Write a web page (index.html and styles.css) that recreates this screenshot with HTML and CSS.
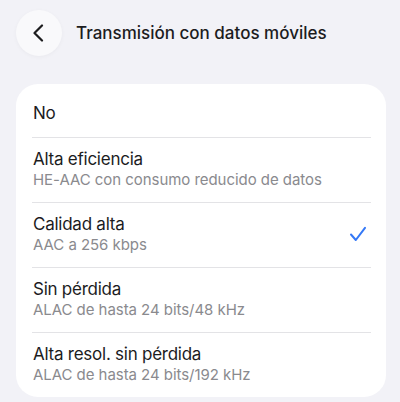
FILE: index.html
```html
<!DOCTYPE html>
<html lang="es">
<head>
<meta charset="utf-8">
<link rel="stylesheet" href="styles.css">
</head>
<body>
<div class="screen">
  <header class="nav">
    <button class="back" aria-label="Atrás">
      <svg width="12" height="18" viewBox="0 0 12 18"><path d="M10 1.5 L2.5 9 L10 16.5" fill="none" stroke="#1c1c1e" stroke-width="2.2" stroke-linecap="round" stroke-linejoin="round"/></svg>
    </button>
    <h1 class="title">Transmisión con datos móviles</h1>
  </header>
  <div class="card">
    <div class="row single"><div class="text"><div class="label">No</div></div></div>
    <div class="row"><div class="text"><div class="label">Alta eficiencia</div><div class="sub">HE-AAC con consumo reducido de datos</div></div></div>
    <div class="row"><div class="text"><div class="label">Calidad alta</div><div class="sub">AAC a 256 kbps</div></div>
      <svg class="check" width="18" height="16" viewBox="0 0 18 16"><path d="M2 8.5 L6.8 14 L16 1.8" fill="none" stroke="#3478f6" stroke-width="2" stroke-linecap="round" stroke-linejoin="round"/></svg>
    </div>
    <div class="row"><div class="text"><div class="label">Sin pérdida</div><div class="sub">ALAC de hasta 24 bits/48 kHz</div></div></div>
    <div class="row last"><div class="text"><div class="label">Alta resol. sin pérdida</div><div class="sub">ALAC de hasta 24 bits/192 kHz</div></div></div>
  </div>
</div>
</body>
</html>
```
FILE: styles.css
```css
* { box-sizing: border-box; }
html, body { margin: 0; padding: 0; }
body {
  background: #f2f2f7;
  font-family: Inter, "Noto Sans", "Liberation Sans", sans-serif;
  color: #1c1c1e;
  width: 400px;
  height: 402px;
  overflow: hidden;
}
.screen { padding: 10px 14px 0 16px; }
.nav {
  display: flex;
  align-items: center;
  gap: 14px;
  height: 46px;
}
.back {
  width: 46px;
  height: 46px;
  border-radius: 50%;
  border: none;
  background: #f9f9fb;
  box-shadow: 0 1px 4px rgba(0,0,0,0.04);
  display: flex;
  align-items: center;
  justify-content: center;
  padding: 0 2px 0 0;
}
.title {
  margin: 0;
  font-size: 17px;
  font-weight: 500;
  letter-spacing: 0;
}
.card {
  margin-top: 28px;
  background: #fff;
  border-radius: 22px;
  padding: 4px 15px 0 16px;
}
.row {
  display: flex;
  align-items: center;
  padding: 10px 0 12px;
  border-bottom: 1px solid #e3e3e6;
}
.row.single { padding: 14px 0 13px; }
.row.last { border-bottom: none; }
.text { flex: 1; }
.label {
  font-size: 17px;
  line-height: 22px;
  letter-spacing: -0.25px;
  padding-left: 1px;
}
.sub {
  font-size: 15px;
  line-height: 20px;
  color: #8a8a8e;
  letter-spacing: -0.05px;
  padding-left: 1px;
}
.check { margin-right: 4px; }
```
